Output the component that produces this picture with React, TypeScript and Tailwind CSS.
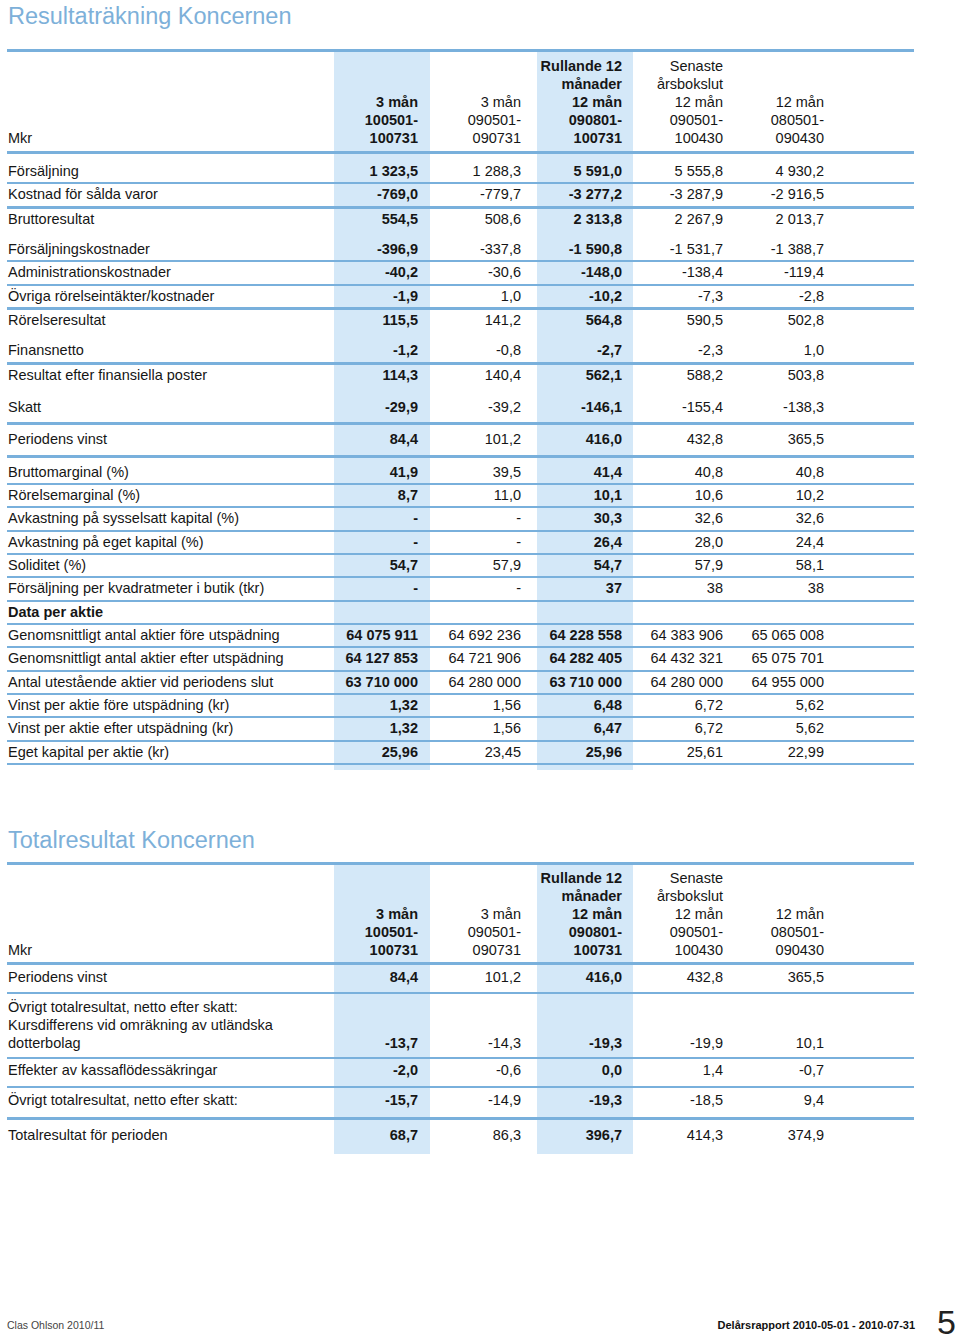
import React from "react";

const LINE = "border-[#79b0dc]";
const SHADE = "bg-[#d4e8f8]";
const widths = [
  "w-[96px] pr-[12px]",
  "w-[107px] pr-[16px]",
  "w-[96px] pr-[11px]",
  "w-[102px] pr-[12px]",
  "w-[101px] pr-[12px]",
];

type RowT = {
  l: string;
  v: string[];
  pad?: string;
  b: "thin" | "thick" | "none";
  bold?: boolean;
};

const borderCls = (b: RowT["b"]) =>
  b === "thin" ? `border-b-2 ${LINE}` : b === "thick" ? `border-b-[3px] ${LINE}` : "";

function Row({ r }: { r: RowT }) {
  const pad = r.pad ?? "";
  return (
    <div className={`flex ${borderCls(r.b)}`}>
      <div className={`w-[327px] pl-[1px] whitespace-nowrap ${pad} ${r.bold ? "font-bold" : ""}`}>{r.l}</div>
      {r.v.map((v, i) => (
        <div
          key={i}
          className={`${widths[i]} text-right whitespace-nowrap ${pad} ${i === 0 || i === 2 ? `${SHADE} font-bold` : ""}`}
        >
          {v}
        </div>
      ))}
      <div className="flex-1" />
    </div>
  );
}

const headCols: string[][] = [
  ["3 mån", "100501-", "100731"],
  ["3 mån", "090501-", "090731"],
  ["Rullande 12", "månader", "12 mån", "090801-", "100731"],
  ["Senaste", "årsbokslut", "12 mån", "090501-", "100430"],
  ["12 mån", "080501-", "090430"],
];

function Header({ pad }: { pad: string }) {
  return (
    <div className={`flex border-b-[3px] ${LINE} leading-[18px]`}>
      <div className={`w-[327px] pl-[1px] flex flex-col justify-end ${pad}`}>Mkr</div>
      {headCols.map((c, i) => (
        <div
          key={i}
          className={`${widths[i]} flex flex-col justify-end items-end whitespace-nowrap ${pad} ${i === 0 || i === 2 ? `${SHADE} font-bold` : ""}`}
        >
          {c.map((t, j) => (
            <div key={j}>{t}</div>
          ))}
        </div>
      ))}
      <div className="flex-1" />
    </div>
  );
}

function ShadeSpacer({ h }: { h: string }) {
  return (
    <div className={`flex ${h}`}>
      <div className="w-[327px]" />
      {widths.map((w, i) => (
        <div key={i} className={`${w} ${i === 0 || i === 2 ? SHADE : ""}`} />
      ))}
      <div className="flex-1" />
    </div>
  );
}

const rows1: RowT[] = [
  { l: "Försäljning", v: ["1 323,5", "1 288,3", "5 591,0", "5 555,8", "4 930,2"], pad: "pt-[7px]", b: "thin" },
  { l: "Kostnad för sålda varor", v: ["-769,0", "-779,7", "-3 277,2", "-3 287,9", "-2 916,5"], b: "thick" },
  { l: "Bruttoresultat", v: ["554,5", "508,6", "2 313,8", "2 267,9", "2 013,7"], b: "none" },
  { l: "Försäljningskostnader", v: ["-396,9", "-337,8", "-1 590,8", "-1 531,7", "-1 388,7"], pad: "pt-[9px]", b: "thin" },
  { l: "Administrationskostnader", v: ["-40,2", "-30,6", "-148,0", "-138,4", "-119,4"], b: "thin" },
  { l: "Övriga rörelseintäkter/kostnader", v: ["-1,9", "1,0", "-10,2", "-7,3", "-2,8"], b: "thick" },
  { l: "Rörelseresultat", v: ["115,5", "141,2", "564,8", "590,5", "502,8"], b: "none" },
  { l: "Finansnetto", v: ["-1,2", "-0,8", "-2,7", "-2,3", "1,0"], pad: "pt-[9px]", b: "thick" },
  { l: "Resultat efter finansiella poster", v: ["114,3", "140,4", "562,1", "588,2", "503,8"], b: "none" },
  { l: "Skatt", v: ["-29,9", "-39,2", "-146,1", "-155,4", "-138,3"], pad: "pt-[11px] pb-[4px]", b: "thick" },
  { l: "Periodens vinst", v: ["84,4", "101,2", "416,0", "432,8", "365,5"], pad: "pt-[4px] pb-[4px]", b: "thick" },
  { l: "Bruttomarginal (%)", v: ["41,9", "39,5", "41,4", "40,8", "40,8"], pad: "pt-[4px]", b: "thin" },
  { l: "Rörelsemarginal (%)", v: ["8,7", "11,0", "10,1", "10,6", "10,2"], b: "thin" },
  { l: "Avkastning på sysselsatt kapital (%)", v: ["-", "-", "30,3", "32,6", "32,6"], b: "thin" },
  { l: "Avkastning på eget kapital (%)", v: ["-", "-", "26,4", "28,0", "24,4"], b: "thin" },
  { l: "Soliditet (%)", v: ["54,7", "57,9", "54,7", "57,9", "58,1"], b: "thin" },
  { l: "Försäljning per kvadratmeter i butik (tkr)", v: ["-", "-", "37", "38", "38"], b: "thin" },
  { l: "Data per aktie", v: ["", "", "", "", ""], b: "thin", bold: true },
  { l: "Genomsnittligt antal aktier före utspädning", v: ["64 075 911", "64 692 236", "64 228 558", "64 383 906", "65 065 008"], b: "thin" },
  { l: "Genomsnittligt antal aktier efter utspädning", v: ["64 127 853", "64 721 906", "64 282 405", "64 432 321", "65 075 701"], b: "thin" },
  { l: "Antal utestående aktier vid periodens slut", v: ["63 710 000", "64 280 000", "63 710 000", "64 280 000", "64 955 000"], b: "thin" },
  { l: "Vinst per aktie före utspädning (kr)", v: ["1,32", "1,56", "6,48", "6,72", "5,62"], b: "thin" },
  { l: "Vinst per aktie efter utspädning (kr)", v: ["1,32", "1,56", "6,47", "6,72", "5,62"], b: "thin" },
  { l: "Eget kapital per aktie (kr)", v: ["25,96", "23,45", "25,96", "25,61", "22,99"], b: "thin" },
];

export default function App() {
  return (
    <div
      className="w-[960px] h-[1338px] bg-white text-[#161616] text-[14.5px] leading-[21.33px] overflow-hidden"
      style={{ fontFamily: '"Liberation Sans", Arial, sans-serif' }}
    >
      <div className="h-[32px] leading-[32px] pl-[8px] text-[23.5px] text-[#7db0d9]">Resultaträkning Koncernen</div>
      <div className="mx-[7px] w-[907px] mt-[17px]">
        <div className={`border-t-[3px] ${LINE}`} />
        <Header pad="pt-[5px] pb-[4px]" />
        {rows1.map((r, i) => (
          <Row key={i} r={r} />
        ))}
        <ShadeSpacer h="h-[5px]" />
      </div>

      <div className="mt-[54px] h-[32px] leading-[32px] pl-[8px] text-[23.5px] text-[#7db0d9]">Totalresultat Koncernen</div>
      <div className="mx-[7px] w-[907px] mt-[6px]">
        <div className={`border-t-[3px] ${LINE}`} />
        <Header pad="pt-[4px] pb-[3px]" />
        <Row r={{ l: "Periodens vinst", v: ["84,4", "101,2", "416,0", "432,8", "365,5"], pad: "pt-[2px] pb-[4px]", b: "thin" }} />
        <div className={`flex border-b-2 ${LINE} leading-[18px]`}>
          <div className="w-[327px] pl-[1px] pt-[4px] pb-[5px]">
            <div>Övrigt totalresultat, netto efter skatt:</div>
            <div>Kursdifferens vid omräkning av utländska</div>
            <div>dotterbolag</div>
          </div>
          {["-13,7", "-14,3", "-19,3", "-19,9", "10,1"].map((v, i) => (
            <div
              key={i}
              className={`${widths[i]} flex flex-col justify-end items-end pt-[4px] pb-[5px] ${i === 0 || i === 2 ? `${SHADE} font-bold` : ""}`}
            >
              {v}
            </div>
          ))}
          <div className="flex-1" />
        </div>
        <Row r={{ l: "Effekter av kassaflödessäkringar", v: ["-2,0", "-0,6", "0,0", "1,4", "-0,7"], pad: "pt-[1px] pb-[4px]", b: "thin" }} />
        <Row r={{ l: "Övrigt totalresultat, netto efter skatt:", v: ["-15,7", "-14,9", "-19,3", "-18,5", "9,4"], pad: "pt-[2px] pb-[6px]", b: "thick" }} />
        <Row r={{ l: "Totalresultat för perioden", v: ["68,7", "86,3", "396,7", "414,3", "374,9"], pad: "pt-[5px] pb-[8px]", b: "none" }} />
      </div>

      <div className="mt-[144px] h-[40px] flex items-start pl-[7px] pr-[4px]">
        <div className="mt-[20px] leading-[14px] text-[10.5px] text-[#444]">Clas Ohlson 2010/11</div>
        <div className="flex-1" />
        <div className="mt-[20px] leading-[14px] text-[11px] font-bold text-[#111]">Delårsrapport 2010-05-01 - 2010-07-31</div>
        <div className="ml-[22px] mt-[10px] leading-[28px] text-[34px] text-[#222]">5</div>
      </div>
    </div>
  );
}
